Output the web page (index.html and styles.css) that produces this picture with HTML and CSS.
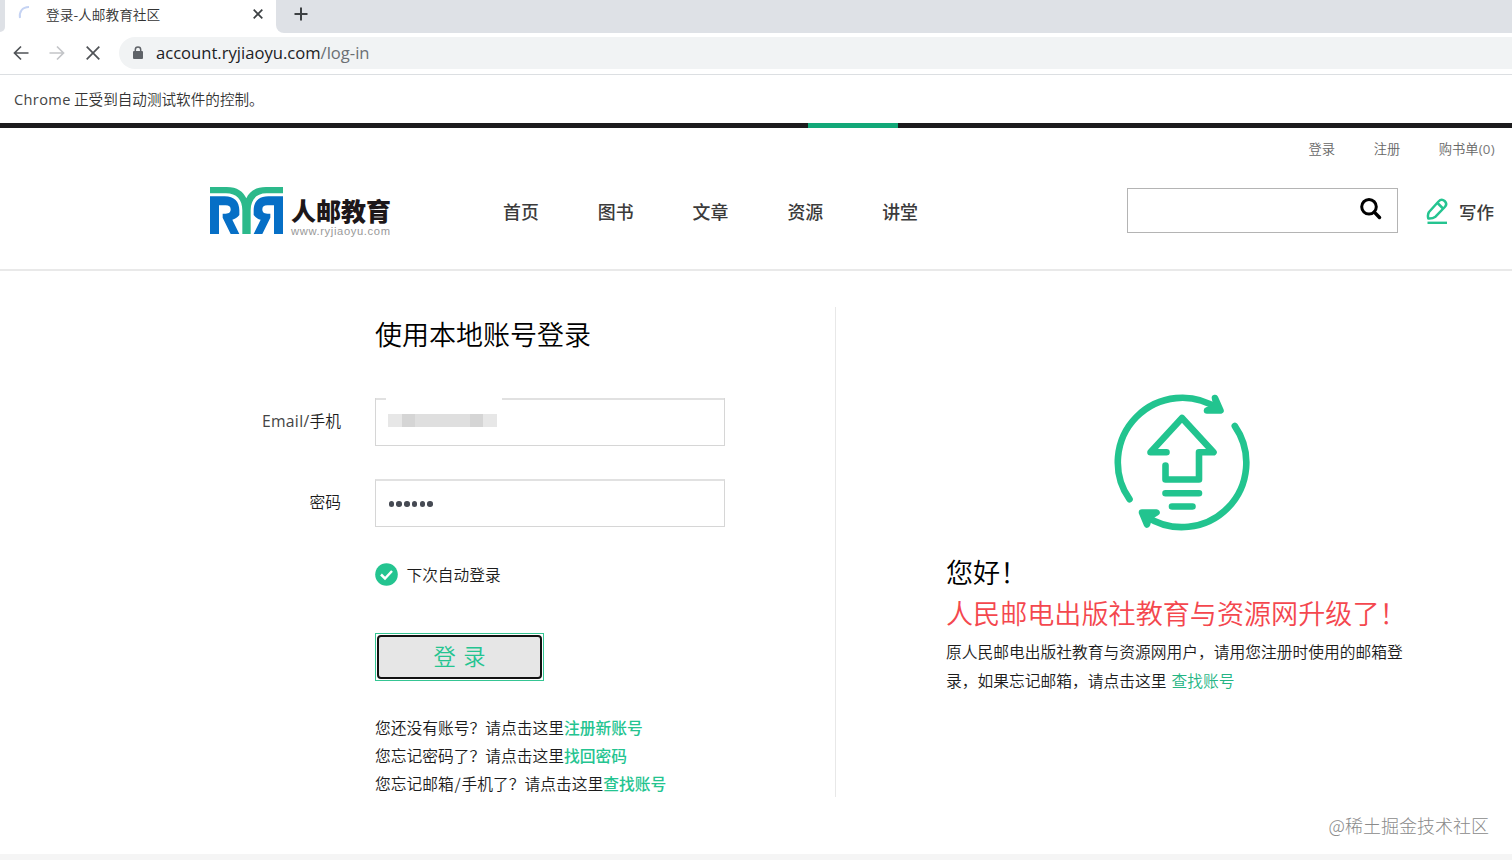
FILE: index.html
```html
<!DOCTYPE html>
<html lang="zh-CN">
<head>
<meta charset="utf-8">
<title>登录-人邮教育社区</title>
<link rel="stylesheet" href="styles.css">
</head>
<body>
<div class="tabstrip">
  <div class="tab-before"></div>
  <div class="tab">
    <svg class="spinner" width="16" height="20" viewBox="0 0 16 20"><path d="M2 14C1 8 4 3 11 3" fill="none" stroke="#c5d3f3" stroke-width="2"/></svg>
    <span class="tab-title">登录-人邮教育社区</span>
    <svg class="tab-close" width="12" height="12" viewBox="0 0 12 12"><path d="M1.7 1.7l8.6 8.6M10.3 1.7l-8.6 8.6" stroke="#3c4043" stroke-width="1.7"/></svg>
  </div>
  <div class="tab-after"><svg width="14" height="14" viewBox="0 0 14 14"><path d="M7 .5v13M.5 7h13" stroke="#3c4043" stroke-width="2"/></svg></div>
</div>
<div class="toolbar">
  <svg width="16" height="16" viewBox="0 0 16 16"><path d="M15.5 8H2M8 1.5L1.5 8 8 14.5" fill="none" stroke="#505357" stroke-width="1.7"/></svg>
  <svg width="16" height="16" viewBox="0 0 16 16"><path d="M.5 8H14M8 1.5L14.5 8 8 14.5" fill="none" stroke="#c3c5c8" stroke-width="1.7"/></svg>
  <svg width="16" height="16" viewBox="0 0 16 16"><path d="M1.7 1.7l12.6 12.6M14.3 1.7L1.7 14.3" stroke="#505357" stroke-width="1.7"/></svg>
  <div class="address">
    <svg width="12" height="14" viewBox="0 0 12 14"><path d="M3.3 6V3.8a2.7 2.7 0 0 1 5.4 0V6" fill="none" stroke="#5f6368" stroke-width="1.5"/><rect x="1" y="5" width="10" height="8" rx="1" fill="#5f6368"/></svg>
    <span class="url">account.ryjiaoyu.com<span class="path">/log-in</span></span>
  </div>
</div>
<div class="infobar"><span class="latin">Chrome</span> 正受到自动测试软件的控制。</div>
<div class="topline"><div class="topline-active"></div></div>
<header class="header">
  <div class="account-links"><a>登录</a><a>注册</a><a>购书单<span class="latin">(0)</span></a></div>
  <div class="main-nav">
    <div class="logo">
      <svg width="73" height="47" viewBox="0 0 219 141">
        <path fill="#2cb98b" d="M0 0H50C82 0 100 14 109 34C118 14 136 0 168 0H219V19H170C139 19 122 38 122 70V141H97V70C97 38 80 19 48 19H0Z"/>
        <path id="logo-r" fill="#066fc6" fill-rule="evenodd" d="M0 28H44C73 28 88 44 88 70V84C82 92 75 96 67 98L88 141H62L38 92V80H47C58 80 62 75 62 67C62 59 57 55 47 55H27V141H0Z"/>
        <use href="#logo-r" transform="translate(219 0) scale(-1 1)"/>
      </svg>
      <div class="logo-words"><b>人邮教育</b><span>www.ryjiaoyu.com</span></div>
    </div>
    <nav class="nav"><a>首页</a><a>图书</a><a>文章</a><a>资源</a><a>讲堂</a></nav>
    <div class="search"><svg width="22" height="22" viewBox="0 0 22 22"><circle cx="9" cy="8.8" r="7.3" fill="none" stroke="#000" stroke-width="3"/><path d="M14.3 14.1L19.5 19.5" stroke="#000" stroke-width="3.5" stroke-linecap="round"/></svg></div>
    <div class="write">
      <svg width="22" height="27" viewBox="0 0 22 27"><g fill="none" stroke="#24c490" stroke-width="2.5" stroke-linejoin="round"><path d="M3 14L12.500 3.500Q15.500 .2 18.600 3Q21.700 6 18.800 9L9.500 18.700Q6.500 20.700 2.300 20.400Q1.300 16.500 3 14Z"/><path d="M11.500 5L17 10.500"/></g><path d="M1.500 24.800h19.500" stroke="#24c490" stroke-width="2.4"/></svg>
      <span>写作</span>
    </div>
  </div>
</header>
<main class="content">
  <section class="login">
    <h1>使用本地账号登录</h1>
    <div class="field"><label><span class="latin">Email/</span>手机</label><div class="input masked"><div class="mask"><i></i><i></i><i></i><i></i><i></i><i></i><i></i><i></i></div></div></div>
    <div class="field"><label>密码</label><div class="input"><div class="dots"><i></i><i></i><i></i><i></i><i></i><i></i></div></div></div>
    <div class="remember"><svg width="23" height="23" viewBox="0 0 23 23"><circle cx="11.5" cy="11.5" r="11.3" fill="#24c490"/><path d="M6 11.5l4 4 7-7.5" fill="none" stroke="#fff" stroke-width="2.5"/></svg><span>下次自动登录</span></div>
    <div class="submit"><div class="submit-inner">登 录</div></div>
    <div class="help">
      <p>您还没有账号？请点击这里<a>注册新账号</a></p>
      <p>您忘记密码了？请点击这里<a>找回密码</a></p>
      <p>您忘记邮箱<span class="slash">/</span>手机了？请点击这里<a>查找账号</a></p>
    </div>
  </section>
  <section class="notice">
    <svg class="upgrade" width="140" height="140" viewBox="0 0 140 140">
      <g fill="none" stroke="#22c48f" stroke-width="6.6" stroke-linecap="round" stroke-linejoin="round">
        <path d="M17.500 106.200A64.400 64.400 0 0 1 106.500 16"/>
        <path d="M122.800 33A64.400 64.400 0 0 1 34 123.200"/>
        <path d="M103 5L108.500 17.500L95 17.500L105 14.500Z"/>
        <path d="M44.500 119.500H30L35 131.500L37 124Z"/>
        <path d="M54.500 59.300H38.500L70 25L101.500 59.300H87V86.500H53.500V72.500M53.500 100.300H87M60 113.500H80.500"/>
      </g>
    </svg>
    <h2>您好！</h2>
    <h2 class="red">人民邮电出版社教育与资源网升级了！</h2>
    <p>原人民邮电出版社教育与资源网用户，请用您注册时使用的邮箱登<br>录，如果忘记邮箱，请点击这里 <a>查找账号</a></p>
  </section>
</main>
<div class="credit">@稀土掘金技术社区</div>
<div class="bottom"></div>
</body>
</html>
```
FILE: styles.css
```css
* { box-sizing: border-box; }
body { margin: 0; width: 1512px; height: 860px; overflow: hidden; display: flex; flex-direction: column; background: #fff; color: #1c1c1c; font-family: "Noto Sans CJK SC", sans-serif; font-weight: 350; }
body > * { flex-shrink: 0; }
svg { display: block; flex-shrink: 0; }
h1, h2, p { margin: 0; font-weight: 350; white-space: nowrap; }
i { display: block; }
.latin { font-family: "Open Sans", sans-serif; font-weight: 400; letter-spacing: .3px; color: #444; }
.tabstrip { height: 33px; display: flex; background: #fff; }
.tab-before { width: 5px; height: 32px; background: #dee1e6; border-bottom-right-radius: 5px; }
.tab { width: 271px; display: flex; align-items: center; padding: 0 12px; height: 28px; }
.spinner { margin-left: 1px; }
.tab-title { margin-left: 12px; font-size: 13.7px; line-height: 21px; height: 21px; width: 206px; color: #333; }
.tab-after { flex: 1; background: #dee1e6; border-bottom-left-radius: 8px; padding: 7px 18px; }
.toolbar { height: 42px; display: flex; align-items: center; padding: 0 0 1px 13px; gap: 20px; border-bottom: 1px solid #dcdfe2; }
.address { flex: 1; height: 32px; margin-left: -2px; background: #f1f3f4; border-radius: 16px 0 0 16px; display: flex; align-items: center; padding-left: 13px; gap: 12px; }
.url { font: 400 16.6px/28px "Open Sans", sans-serif; color: #202124; }
.path { color: #6b6f73; }
.infobar { height: 48px; line-height: 47px; padding-left: 14px; font-size: 14.6px; color: #333; }
.infobar .latin { letter-spacing: .35px; }
.topline { height: 5px; background: #1c1b1d; padding-left: 808px; }
.topline-active { width: 90px; height: 5px; background: #12a878; }
.header { height: 143px; border-bottom: 2px solid #e9e9e9; }
.account-links { display: flex; justify-content: flex-end; gap: 38.5px; padding: 11px 17px 0 0; height: 31px; font-size: 13.3px; line-height: 20px; color: #666; }
.account-links .latin { letter-spacing: .3px; color: #777; }
.main-nav { display: flex; padding: 28px 18px 0 210px; height: 77px; }
.logo { display: flex; width: 293px; }
.logo-words { margin-left: 8px; display: flex; flex-direction: column; color: #1d1719; }
.logo-words b { font-size: 25px; line-height: 47px; height: 38px; font-weight: 900; }
.logo-words span { font: 400 11.2px/13px "Liberation Sans", sans-serif; letter-spacing: .63px; color: #999; }
.nav { width: 624px; display: flex; gap: 59px; font-size: 17.9px; line-height: 49px; font-weight: 500; color: #3b3b3b; }
.search { width: 271px; height: 45px; margin-top: 1px; border: 1px solid #b4b4b4; padding: 9px 0 0 232px; }
.write { display: flex; flex: 1; justify-content: space-between; margin-left: 28px; font-size: 17.5px; font-weight: 500; line-height: 49px; color: #3b3b3b; }
.write svg { margin-top: 11px; }
.content { height: 526px; display: flex; padding-top: 36px; }
.login { width: 836px; height: 490px; border-right: 1px solid #e8e8e8; padding-left: 241px; }
.login h1 { padding-left: 134px; font-size: 27px; line-height: 40px; margin-top: 7px; color: #000; }
.field { display: flex; align-items: center; height: 48px; font-size: 15.75px; margin-top: 44px; }
.field + .field { margin-top: 33px; }
.field label { width: 100px; text-align: right; margin-right: 34px; line-height: 24px; padding-bottom: 3px; white-space: nowrap; }
.input { width: 350px; height: 48px; border: 1px solid #d6d6d6; border-top: 2px solid #e1e1e1; }
.masked { border-top: 0; background: linear-gradient(#e1e1e1, #e1e1e1) 0 0 / 10px 2px no-repeat, linear-gradient(#e1e1e1, #e1e1e1) 126px 0 / 223px 2px no-repeat; }
.mask { display: flex; margin: 16px 0 0 12px; }
.mask i { width: 13.6px; height: 13px; background: #dfdfdf; }
.mask i:first-child, .mask i:last-child { background: #e7e7e7; }
.mask i:nth-child(2), .mask i:nth-child(7) { background: #d5d5d5; }
.dots { display: flex; gap: 2.2px; padding: 20px 0 0 12.5px; }
.dots i { width: 5.6px; height: 5.6px; border-radius: 50%; background: #464a53; }
.remember { display: flex; align-items: center; gap: 8.5px; margin: 35px 0 0 134px; height: 24px; font-size: 15.7px; line-height: 24px; }
.remember span { padding-top: 1px; }
.submit { width: 169px; height: 48px; margin: 47px 0 0 134px; border: 1px solid #35c593; padding: 1px; background: #fff; }
.submit-inner { height: 44px; border: 2px solid #111; border-radius: 4px; background: #e6e6e6; color: #24c490; text-align: center; font-size: 22.3px; line-height: 37px; word-spacing: 2.5px; }
.help { margin: 33px 0 0 134px; font-size: 15.75px; line-height: 28px; }
.help a { color: #24c490; font-weight: 500; }
.slash { padding: 0 .8px; }
.notice { padding-left: 110px; }
.upgrade { margin: 86px 0 0 166px; }
.notice h2 { font-size: 27.1px; line-height: 41px; color: #000; }
.upgrade + h2 { margin-top: 18px; }
.notice .red { color: #f4474e; }
.notice p { font-size: 15.75px; line-height: 29px; margin-top: 4px; }
.notice a { color: #24b584; margin-left: 1.5px; }
.credit { height: 57px; padding: 15px 23px 0 0; text-align: right; font-size: 18px; line-height: 26px; font-weight: 300; color: #8a8a8a; }
.bottom { height: 6px; background: #f5f5f5; }
```
